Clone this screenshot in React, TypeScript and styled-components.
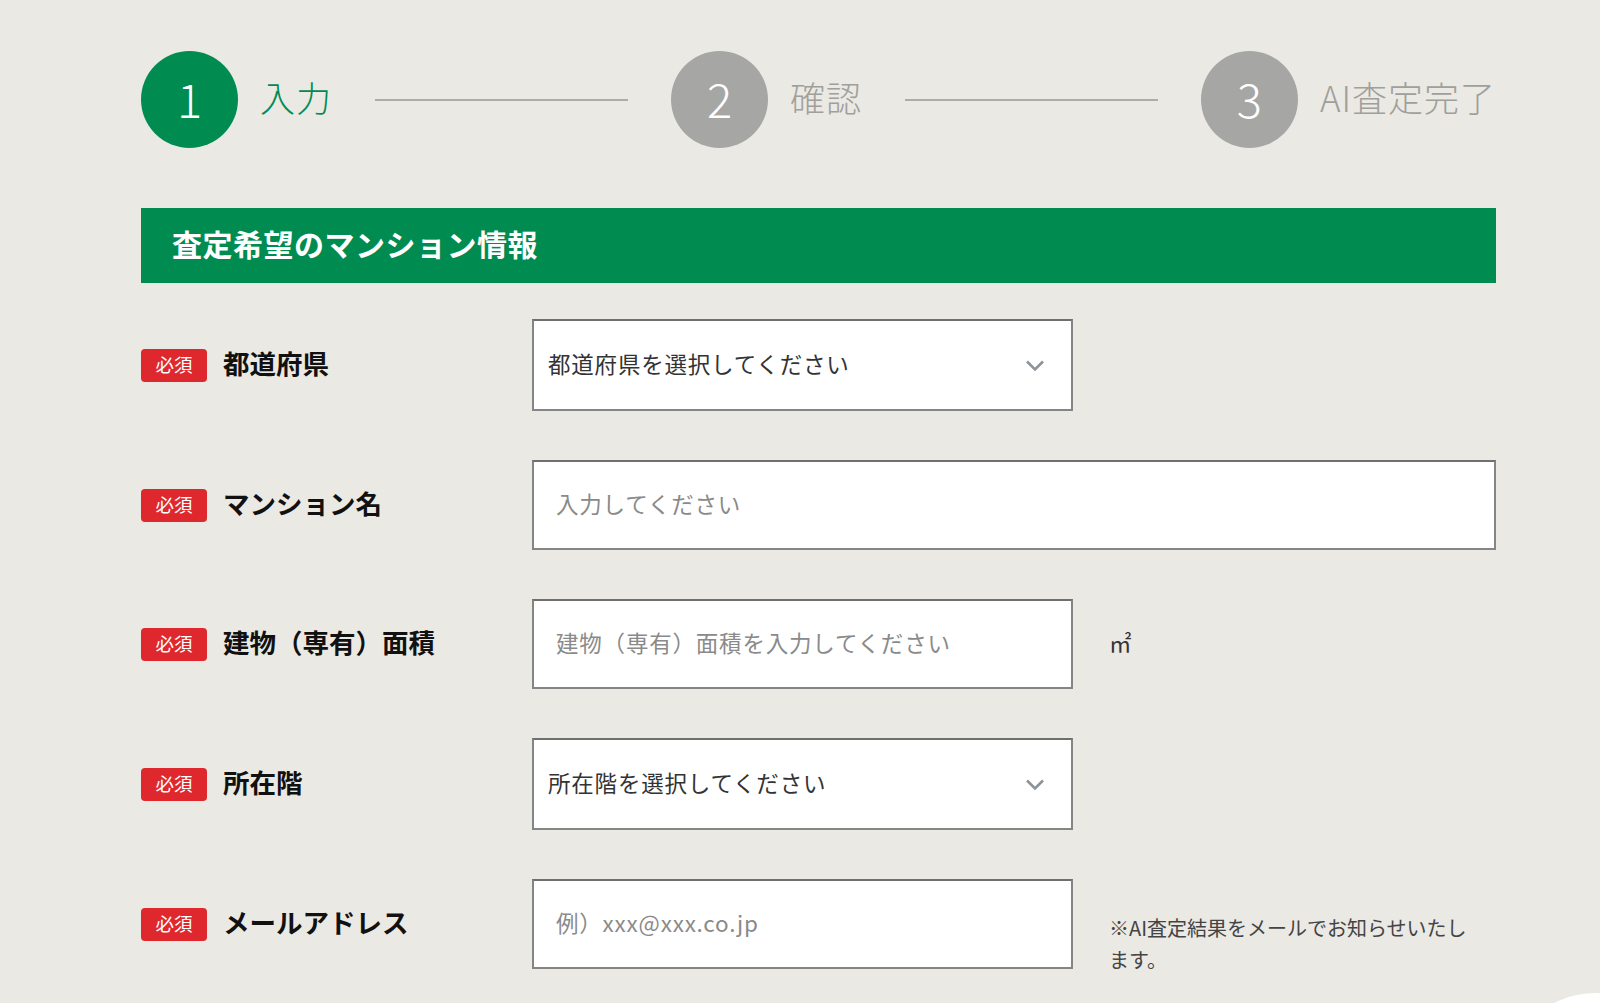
import React from "react";
import styled, { createGlobalStyle } from "styled-components";

const GlobalStyle = createGlobalStyle`
  html, body {
    margin: 0;
    padding: 0;
    background: #ebe9e4;
    font-family: "Noto Sans CJK JP", "Noto Sans", sans-serif;
    color: #222;
  }
  * { box-sizing: border-box; }
`;

const Page = styled.div`
  min-height: 1003px;
  padding: 51px 0 0 141px;
  overflow: hidden;
`;

const Container = styled.div`
  width: 1355px;
`;

const Stepper = styled.div`
  display: flex;
  align-items: center;
`;

const Step = styled.div`
  display: flex;
  align-items: center;
  gap: 22px;
`;

const Circle = styled.div<{ $active?: boolean }>`
  width: 97px;
  height: 97px;
  border-radius: 50%;
  background: ${p => (p.$active ? "#008c51" : "#a6a6a5")};
  color: #fff;
  display: flex;
  align-items: center;
  justify-content: center;
  padding-bottom: 5px;
  font-weight: 300;
  font-size: 47px;
  line-height: 1;
`;

const StepLabel = styled.span<{ $active?: boolean }>`
  padding-bottom: 6px;
  font-size: 35px;
  font-weight: 300;
  letter-spacing: 1px;
  color: ${p => (p.$active ? "#008c51" : "#a09f9c")};
`;

const StepLine = styled.div`
  flex: 1;
  height: 2px;
  background: #acacaa;
  margin: 0 43px;
`;

const SectionTitle = styled.h2`
  margin: 60px 0 36px;
  height: 75px;
  background: #008c51;
  color: #fff;
  font-size: 30px;
  font-weight: 700;
  display: flex;
  align-items: center;
  padding: 0 0 5px 31px;
  letter-spacing: 0.5px;
`;

const Fields = styled.div`
  display: flex;
  flex-direction: column;
  gap: 49px;
`;

const Row = styled.div`
  display: flex;
  align-items: center;
`;

const LabelCol = styled.div`
  width: 391px;
  display: flex;
  align-items: center;
  gap: 16px;
`;

const Badge = styled.span`
  width: 66px;
  height: 33px;
  border-radius: 4px;
  background: #df282e;
  color: #fff;
  font-size: 18.5px;
  display: flex;
  align-items: center;
  justify-content: center;
  padding-bottom: 2px;
`;

const Label = styled.span`
  padding-bottom: 5px;
  font-size: 26.5px;
  font-weight: 700;
  color: #111;
`;

const Box = styled.div<{ $wide?: boolean; $tall?: boolean }>`
  width: ${p => (p.$wide ? "964px" : "541px")};
  height: ${p => (p.$tall ? "92px" : "90px")};
  background: #fff;
  border: 2px solid #858585;
  border-top-color: #6f6f6f;
  display: flex;
  align-items: center;
  justify-content: space-between;
`;

const SelectText = styled.span`
  padding: 0 0 5px 14px;
  font-size: 22.5px;
  color: #333;
  letter-spacing: 0.8px;
`;

const Placeholder = styled.span`
  padding: 0 0 5px 22px;
  font-size: 22.5px;
  color: #8a8a8a;
  letter-spacing: 0.8px;
`;

const Chevron = styled.svg`
  margin-right: 26px;
`;

const Unit = styled.span`
  margin-left: 36px;
  padding-bottom: 4px;
  font-size: 22.5px;
  color: #333;
`;

const Note = styled.p`
  margin: 0 0 -7px 36px;
  align-self: flex-end;
  width: 372px;
  font-size: 20px;
  line-height: 32px;
  color: #444;
`;

const Corner = styled.div`
  position: fixed;
  right: -90px;
  bottom: -178px;
  width: 188px;
  height: 188px;
  border-radius: 50%;
  background: #fff;
`;

const ChevronIcon = () => (
  <Chevron width="20" height="13" viewBox="0 0 20 13">
    <polyline
      points="2,2.5 10,10.5 18,2.5"
      fill="none"
      stroke="#8b939b"
      strokeWidth="2.6"
    />
  </Chevron>
);

const steps = [
  { num: "1", label: "入力", active: true },
  { num: "2", label: "確認", active: false },
  { num: "3", label: "AI査定完了", active: false }
];

const App: React.FC = () => {
  return (
    <Page>
      <GlobalStyle />
      <Container>
        <Stepper>
          {steps.map((s, i) => (
            <React.Fragment key={s.num}>
              {i > 0 && <StepLine />}
              <Step>
                <Circle $active={s.active}>{s.num}</Circle>
                <StepLabel $active={s.active}>{s.label}</StepLabel>
              </Step>
            </React.Fragment>
          ))}
        </Stepper>

        <SectionTitle>査定希望のマンション情報</SectionTitle>

        <Fields>
          <Row>
            <LabelCol>
              <Badge>必須</Badge>
              <Label>都道府県</Label>
            </LabelCol>
            <Box $tall>
              <SelectText>都道府県を選択してください</SelectText>
              <ChevronIcon />
            </Box>
          </Row>

          <Row>
            <LabelCol>
              <Badge>必須</Badge>
              <Label>マンション名</Label>
            </LabelCol>
            <Box $wide>
              <Placeholder>入力してください</Placeholder>
            </Box>
          </Row>

          <Row>
            <LabelCol>
              <Badge>必須</Badge>
              <Label>建物（専有）面積</Label>
            </LabelCol>
            <Box>
              <Placeholder>建物（専有）面積を入力してください</Placeholder>
            </Box>
            <Unit>㎡</Unit>
          </Row>

          <Row>
            <LabelCol>
              <Badge>必須</Badge>
              <Label>所在階</Label>
            </LabelCol>
            <Box $tall>
              <SelectText>所在階を選択してください</SelectText>
              <ChevronIcon />
            </Box>
          </Row>

          <Row>
            <LabelCol>
              <Badge>必須</Badge>
              <Label>メールアドレス</Label>
            </LabelCol>
            <Box>
              <Placeholder>例）xxx@xxx.co.jp</Placeholder>
            </Box>
            <Note>※AI査定結果をメールでお知らせいたします。</Note>
          </Row>
        </Fields>
      </Container>
      <Corner />
    </Page>
  );
};

export default App;
